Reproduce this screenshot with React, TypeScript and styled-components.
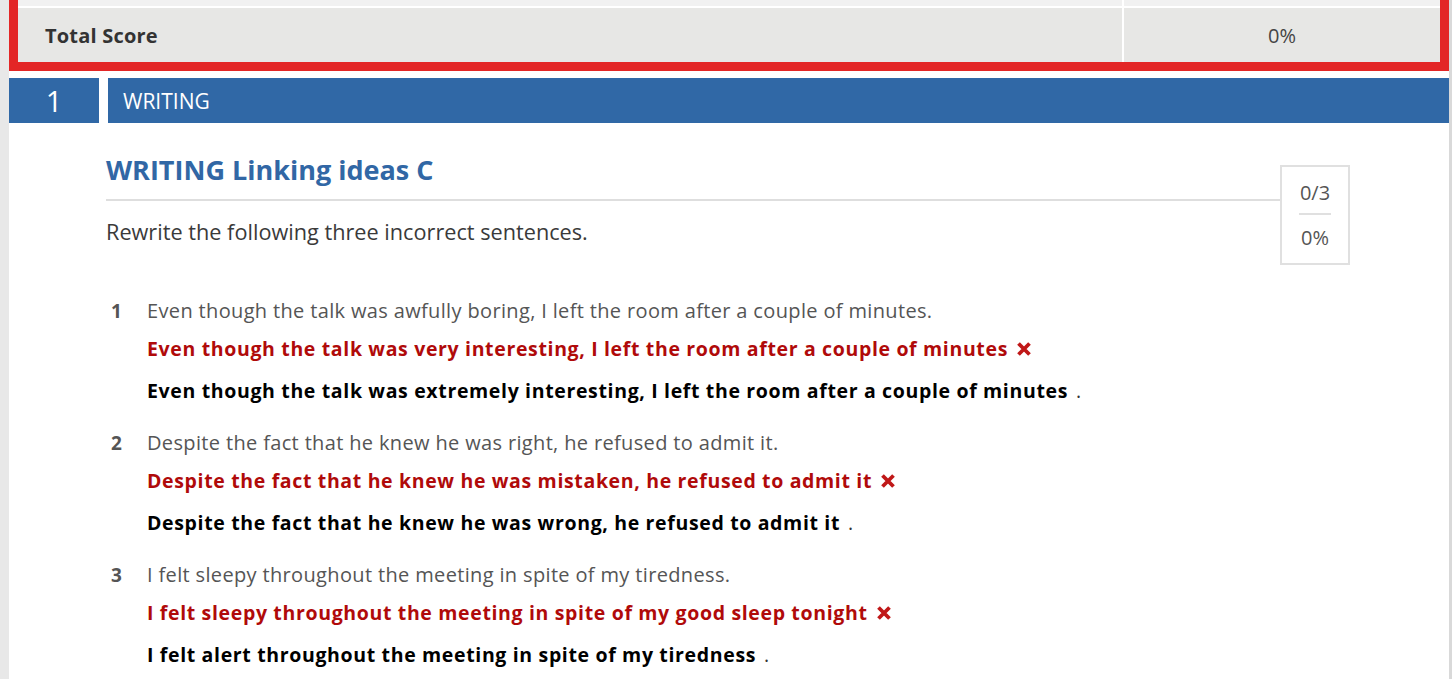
import React from "react";
import styled, { createGlobalStyle } from "styled-components";

const Global = createGlobalStyle`
  html, body { margin: 0; padding: 0; }
  body {
    background: #e8e8e8;
    font-family: "Open Sans", "Noto Sans", Arial, sans-serif;
    overflow: hidden;
  }
`;

const Page = styled.div`
  margin-left: 9px;
  width: 1440px;
  min-height: 679px;
  background: #ffffff;
  border-right: 3px solid #d9d9d9;
`;

const ScoreTable = styled.div`
  border: 9px solid #e32626;
  border-top: none;
  background: #ffffff;
`;

const ScoreRow = styled.div<{ $h: number; $bg: string }>`
  display: grid;
  grid-template-columns: 1104px 1fr;
  column-gap: 2px;
  height: ${(p) => p.$h}px;
  & + & { margin-top: 2px; }
  & > div { background: ${(p) => p.$bg}; }
`;

const LabelCell = styled.div`
  display: flex;
  align-items: center;
  padding-left: 27px;
  font-weight: 700;
  font-size: 20px;
  letter-spacing: 0.2px;
  color: #333;
`;

const ValueCell = styled.div`
  display: flex;
  align-items: center;
  justify-content: center;
  font-size: 20px;
  color: #444;
`;

const SectionBar = styled.div`
  margin-top: 7px;
  display: flex;
  height: 45px;
  gap: 9px;
`;

const SectionNum = styled.div`
  width: 90px;
  background: #3068a6;
  color: #fff;
  font-size: 29px;
  display: flex;
  align-items: center;
  justify-content: center;
`;

const SectionTitle = styled.div`
  flex: 1;
  background: #3068a6;
  color: #fff;
  font-size: 21px;
  display: flex;
  align-items: center;
  padding-left: 15px;
`;

const Content = styled.div`
  padding: 29px 0 0 97px;
`;

const Header = styled.div`
  display: flex;
  align-items: flex-start;
`;

const HeaderMain = styled.div`
  flex: 1;
`;

const Title = styled.h2`
  margin: 0;
  font-size: 27px;
  font-weight: 700;
  color: #3167a5;
  line-height: 36px;
  padding-bottom: 11px;
  border-bottom: 2px solid #dedede;
`;

const Instructions = styled.p`
  margin: 17px 0 0;
  font-size: 21.7px;
  color: #3a3a3a;
  line-height: 28px;
`;

const ScoreBox = styled.div`
  margin-top: 13px;
  margin-right: 99px;
  width: 66px;
  height: 96px;
  border: 2px solid #e0e0e0;
  display: flex;
  flex-direction: column;
  align-items: center;
  justify-content: center;
  font-size: 20px;
  color: #555;
  line-height: 26px;
`;

const ScoreDivider = styled.div`
  width: 32px;
  height: 2px;
  background: #e0e0e0;
  margin: 7px 0 10px;
`;

const List = styled.ol`
  list-style: none;
  margin: 32px 0 0;
  padding: 0;
  display: flex;
  flex-direction: column;
  gap: 24px;
`;

const Item = styled.li`
  display: grid;
  grid-template-columns: 41px 1fr;
`;

const ItemNum = styled.div`
  padding-left: 5px;
  font-weight: 700;
  font-size: 19px;
  color: #555;
  line-height: 28px;
`;

const ItemBody = styled.div`
  display: flex;
  flex-direction: column;
`;

const Question = styled.div`
  font-size: 20px;
  letter-spacing: 0.35px;
  color: #555;
  line-height: 28px;
`;

const Wrong = styled.div`
  margin-top: 10px;
  font-size: 19.5px;
  letter-spacing: 0.65px;
  font-weight: 700;
  color: #b00a0a;
  line-height: 28px;
  display: flex;
  align-items: center;
  gap: 9px;
`;

const Correct = styled.div`
  margin-top: 14px;
  font-size: 19.5px;
  letter-spacing: 0.65px;
  font-weight: 700;
  color: #000;
  line-height: 28px;
`;

const Dot = styled.span`
  font-weight: 400;
  color: #333;
  margin-left: 8px;
`;

const CrossIcon = styled.svg`
  flex: none;
  width: 14px;
  height: 14px;
`;

const Cross = () => (
  <CrossIcon viewBox="0 0 14 14">
    <path d="M1.5 1.5 L12.5 12.5 M12.5 1.5 L1.5 12.5" stroke="#c01818" strokeWidth="3.8" strokeLinecap="butt" />
  </CrossIcon>
);

const items = [
  {
    q: "Even though the talk was awfully boring, I left the room after a couple of minutes.",
    w: "Even though the talk was very interesting, I left the room after a couple of minutes",
    c: "Even though the talk was extremely interesting, I left the room after a couple of minutes",
  },
  {
    q: "Despite the fact that he knew he was right, he refused to admit it.",
    w: "Despite the fact that he knew he was mistaken, he refused to admit it",
    c: "Despite the fact that he knew he was wrong, he refused to admit it",
  },
  {
    q: "I felt sleepy throughout the meeting in spite of my tiredness.",
    w: "I felt sleepy throughout the meeting in spite of my good sleep tonight",
    c: "I felt alert throughout the meeting in spite of my tiredness",
  },
];

export default function App() {
  return (
    <>
      <Global />
      <Page>
        <ScoreTable>
          <ScoreRow $h={6} $bg="#f1f1f1">
            <div />
            <div />
          </ScoreRow>
          <ScoreRow $h={54} $bg="#e7e7e5">
            <LabelCell>Total Score</LabelCell>
            <ValueCell>0%</ValueCell>
          </ScoreRow>
        </ScoreTable>
        <SectionBar>
          <SectionNum>1</SectionNum>
          <SectionTitle>WRITING</SectionTitle>
        </SectionBar>
        <Content>
          <Header>
            <HeaderMain>
              <Title>WRITING Linking ideas C</Title>
              <Instructions>Rewrite the following three incorrect sentences.</Instructions>
            </HeaderMain>
            <ScoreBox>
              <span>0/3</span>
              <ScoreDivider />
              <span>0%</span>
            </ScoreBox>
          </Header>
          <List>
            {items.map((it, i) => (
              <Item key={i}>
                <ItemNum>{i + 1}</ItemNum>
                <ItemBody>
                  <Question>{it.q}</Question>
                  <Wrong>
                    <span>{it.w}</span>
                    <Cross />
                  </Wrong>
                  <Correct>
                    {it.c}
                    <Dot>.</Dot>
                  </Correct>
                </ItemBody>
              </Item>
            ))}
          </List>
        </Content>
      </Page>
    </>
  );
}
